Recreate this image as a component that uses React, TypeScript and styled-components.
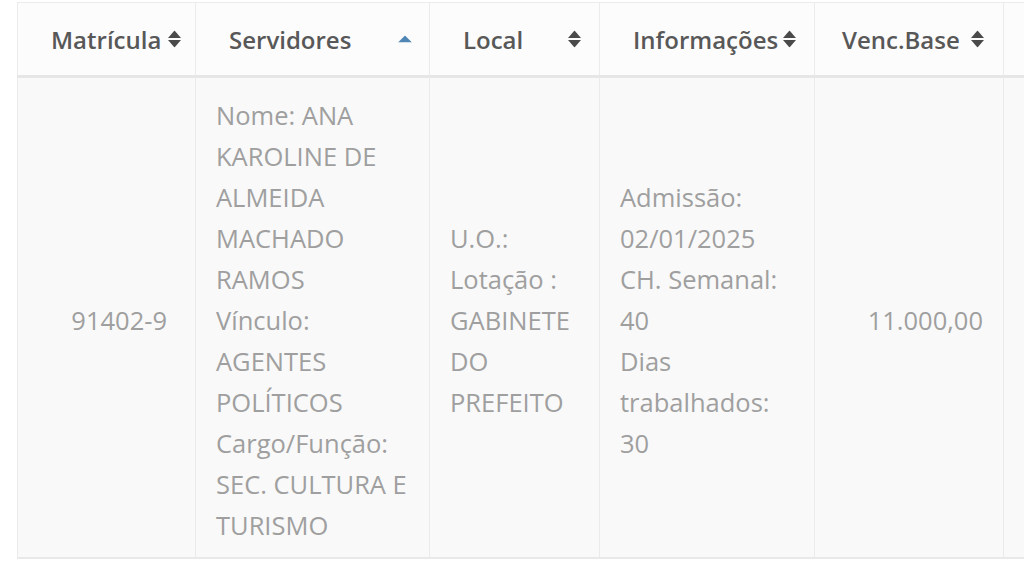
import React from "react";
import styled, { createGlobalStyle } from "styled-components";

const GlobalStyle = createGlobalStyle`
  html, body { margin: 0; padding: 0; background: #ffffff; }
  body { font-family: "Open Sans", "Liberation Sans", sans-serif; }
`;

const Page = styled.div`
  width: 1024px;
  height: 562px;
  overflow: hidden;
  padding: 2px 0 0 17px;
  box-sizing: border-box;
  background: #ffffff;
`;

const Table = styled.table`
  border-collapse: collapse;
  table-layout: fixed;
  width: 1100px;
  font-family: "Open Sans", "Liberation Sans", sans-serif;
`;

const HeadRow = styled.tr`
  background: #fcfcfd;
  height: 74px;
`;

const HeadCell = styled.th<{ $pl: number }>`
  position: relative;
  border: 1px solid #ebebeb;
  border-bottom: 3px solid #e6e6e6;
  padding: 0 30px 0 ${(p) => p.$pl}px;
  text-align: left;
  font-size: 24px;
  font-weight: 600;
  color: #585858;
  white-space: nowrap;
  vertical-align: middle;
`;

const SortSlot = styled.span<{ $right: number }>`
  position: absolute;
  top: 50%;
  right: ${(p) => p.$right}px;
  transform: translateY(-50%);
  display: flex;
  align-items: center;
`;

const BodyRow = styled.tr`
  background: #f9f9f9;
`;

const BodyCell = styled.td<{ $align?: "left" | "right"; $pl: number; $pr: number }>`
  border: 1px solid #ebebeb;
  border-bottom: 2px solid #e9e9e9;
  padding: 17px ${(p) => p.$pr}px 11px ${(p) => p.$pl}px;
  text-align: ${(p) => p.$align ?? "left"};
  vertical-align: middle;
  font-size: 25.5px;
  line-height: 41px;
  color: #9f9f9f;
`;

const Line = styled.span`
  display: block;
`;

function SortBoth() {
  return (
    <svg width="13" height="17" viewBox="0 0 13 17">
      <path d="M6.5 0 L13 7.5 L0 7.5 Z" fill="#4a4a4a" />
      <path d="M0 9.5 L13 9.5 L6.5 17 Z" fill="#4a4a4a" />
    </svg>
  );
}

function SortAsc() {
  return (
    <svg width="14" height="7" viewBox="0 0 14 7">
      <path d="M7 0 L14 7 L0 7 Z" fill="#4f86b4" />
    </svg>
  );
}

const columns = [
  { label: "Matrícula", width: 178, pl: 33, right: 14, asc: false },
  { label: "Servidores", width: 234, pl: 33, right: 17, asc: true },
  { label: "Local", width: 170, pl: 33, right: 18, asc: false },
  { label: "Informações", width: 215, pl: 33, right: 18, asc: false },
  { label: "Venc.Base", width: 189, pl: 27, right: 19, asc: false },
];

export default function App() {
  return (
    <>
      <GlobalStyle />
      <Page>
        <Table>
          <colgroup>
            {columns.map((c) => (
              <col key={c.label} style={{ width: c.width }} />
            ))}
            <col style={{ width: 114 }} />
          </colgroup>
          <thead>
            <HeadRow>
              {columns.map((c) => (
                <HeadCell key={c.label} $pl={c.pl}>
                  {c.label}
                  <SortSlot $right={c.right}>{c.asc ? <SortAsc /> : <SortBoth />}</SortSlot>
                </HeadCell>
              ))}
              <HeadCell $pl={30} />
            </HeadRow>
          </thead>
          <tbody>
            <BodyRow>
              <BodyCell $align="right" $pl={20} $pr={28}>
                91402-9
              </BodyCell>
              <BodyCell $pl={20} $pr={20}>
                <Line>Nome: ANA KAROLINE DE ALMEIDA MACHADO RAMOS</Line>
                <Line>Vínculo: AGENTES POLÍTICOS</Line>
                <Line>Cargo/Função: SEC. CULTURA E TURISMO</Line>
              </BodyCell>
              <BodyCell $pl={20} $pr={20}>
                <Line>U.O.:</Line>
                <Line>Lotação : GABINETE DO PREFEITO</Line>
              </BodyCell>
              <BodyCell $pl={20} $pr={20}>
                <Line>Admissão: 02/01/2025</Line>
                <Line>CH. Semanal: 40</Line>
                <Line>Dias trabalhados: 30</Line>
              </BodyCell>
              <BodyCell $align="right" $pl={20} $pr={20}>
                11.000,00
              </BodyCell>
              <BodyCell $pl={20} $pr={20} />
            </BodyRow>
          </tbody>
        </Table>
      </Page>
    </>
  );
}
